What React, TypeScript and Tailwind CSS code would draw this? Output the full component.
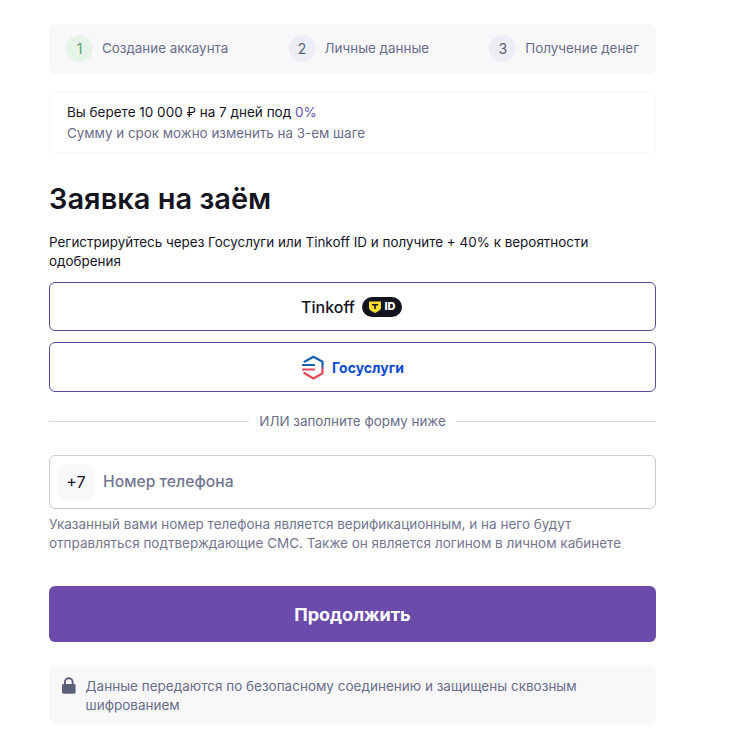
export default function App() {
  const steps = [
    { n: "1", t: "Создание аккаунта", c: "bg-[#e6f4e8] text-[#5f9f6c]" },
    { n: "2", t: "Личные данные", c: "bg-[#eceef5] text-[#5d6079]" },
    { n: "3", t: "Получение денег", c: "bg-[#eceef5] text-[#5d6079]" },
  ];
  return (
    <div className="w-[736px] h-[744px] overflow-hidden bg-white font-['Inter',sans-serif] text-[#14141f]">
      <div className="ml-[49px] w-[607px] pt-[24px]">
        <div className="h-[50px] bg-[#f8f8fb] rounded-[6px] flex items-center justify-between pl-[17px] pr-[17px] pb-[1px]">
          {steps.map((s) => (
            <div key={s.n} className="flex items-center gap-[9px]">
              <div className={`w-[27px] h-[27px] rounded-full flex items-center justify-center text-[14px] ${s.c}`}>{s.n}</div>
              <span className="text-[13.4px] text-[#696d88]">{s.t}</span>
            </div>
          ))}
        </div>
        <div className="mt-[17px] h-[62px] border border-[#f7f7fa] rounded-[6px] pl-[17px] pt-[10px] text-[13.5px] leading-[21px]">
          <div>Вы берете 10 000 ₽ на 7 дней под <span className="text-[#6b4cab]">0%</span></div>
          <div className="text-[13.4px] text-[#696d88]">Сумму и срок можно изменить на 3-ем шаге</div>
        </div>
        <h1 className="mt-[27px] text-[29px] leading-[38px] font-semibold">Заявка на заём</h1>
        <p className="mt-[15px] text-[13.45px] leading-[19px]">Регистрируйтесь через Госуслуги или Tinkoff ID и получите + 40% к вероятности одобрения</p>
        <button className="mt-[11px] w-full h-[49px] border border-[#5b4a9a] rounded-[6px] flex items-center justify-center gap-[7px] pr-[2px]">
          <span className="text-[16px] font-medium">Tinkoff</span>
          <span className="w-[40px] h-[20px] bg-[#14141f] rounded-full flex items-center justify-center gap-[2px]">
            <svg width="14" height="14" viewBox="0 0 14 14">
              <path d="M1 1.500h12v6c0 2.500-3 4-6 5.500C4 11.500 1 10 1 7.500z" fill="#ffdd2d" />
              <path d="M4 4h6v1.500H7.800V9H6.200V5.500H4z" fill="#14141f" />
            </svg>
            <span className="text-[11px] font-extrabold text-white leading-none">ID</span>
          </span>
        </button>
        <button className="mt-[11px] w-full h-[50px] border border-[#5b4a9a] rounded-[6px] flex items-center justify-center gap-[7px]">
          <svg width="24" height="26" viewBox="0 0 24 26" className="mt-[1px]">
            <defs>
              <linearGradient id="g" x1="0" y1="0" x2="0" y2="1">
                <stop offset="0.4" stopColor="#1a5fb4" />
                <stop offset="0.6" stopColor="#e5485a" />
              </linearGradient>
            </defs>
            <path d="M3.500 7.500V6.800L12.500 1.800 21.500 6.800V18.200L12.500 23.500 3.500 18.200V17" fill="none" stroke="url(#g)" strokeWidth="2.200" strokeLinejoin="round" />
            <path d="M1 10H14" stroke="#1a5fb4" strokeWidth="2" />
            <path d="M1 14.500H14" stroke="#e5485a" strokeWidth="2" />
          </svg>
          <span className="text-[14px] font-bold text-[#0d4cd3]">Госуслуги</span>
        </button>
        <div className="mt-[19px] flex items-center gap-[10px] text-[13.4px] text-[#696d88]">
          <div className="h-px bg-[#d8d9e3] flex-1" />
          <span>ИЛИ заполните форму ниже</span>
          <div className="h-px bg-[#d8d9e3] flex-1" />
        </div>
        <div className="mt-[24px] h-[54px] border border-[#c9cad6] rounded-[6px] flex items-center pl-[8px] gap-[9px]">
          <div className="w-[36px] h-[36px] bg-[#f8f8fb] rounded-[6px] flex items-center justify-center text-[16px]">+7</div>
          <span className="text-[15.7px] font-medium text-[#73768f]">Номер телефона</span>
        </div>
        <p className="mt-[6px] text-[13.5px] leading-[19px] text-[#73768f]">Указанный вами номер телефона является верификационным, и на него будут отправляться подтверждающие СМС. Также он является логином в личном кабинете</p>
        <button className="mt-[33px] w-full h-[56px] bg-[#6b4cab] rounded-[6px] text-white text-[18px] font-bold">Продолжить</button>
        <div className="mt-[23px] h-[59px] bg-[#f8f8fb] rounded-[6px] flex items-start pl-[13px] pt-[12px] gap-[10px]">
          <svg width="14" height="18" viewBox="0 0 14 18" fill="#5d6079"><path d="M2 7V5a5 5 0 0 1 10 0v2h.5A1.500 1.500 0 0 1 14 8.500v7a1.500 1.500 0 0 1-1.500 1.500h-11A1.500 1.500 0 0 1 0 15.500v-7A1.500 1.500 0 0 1 1.500 7zm2 0h6V5a3 3 0 0 0-6 0z" /></svg>
          <span className="text-[13.5px] leading-[19px] text-[#696d88]">Данные передаются по безопасному соединению и защищены сквозным шифрованием</span>
        </div>
      </div>
    </div>
  );
}
